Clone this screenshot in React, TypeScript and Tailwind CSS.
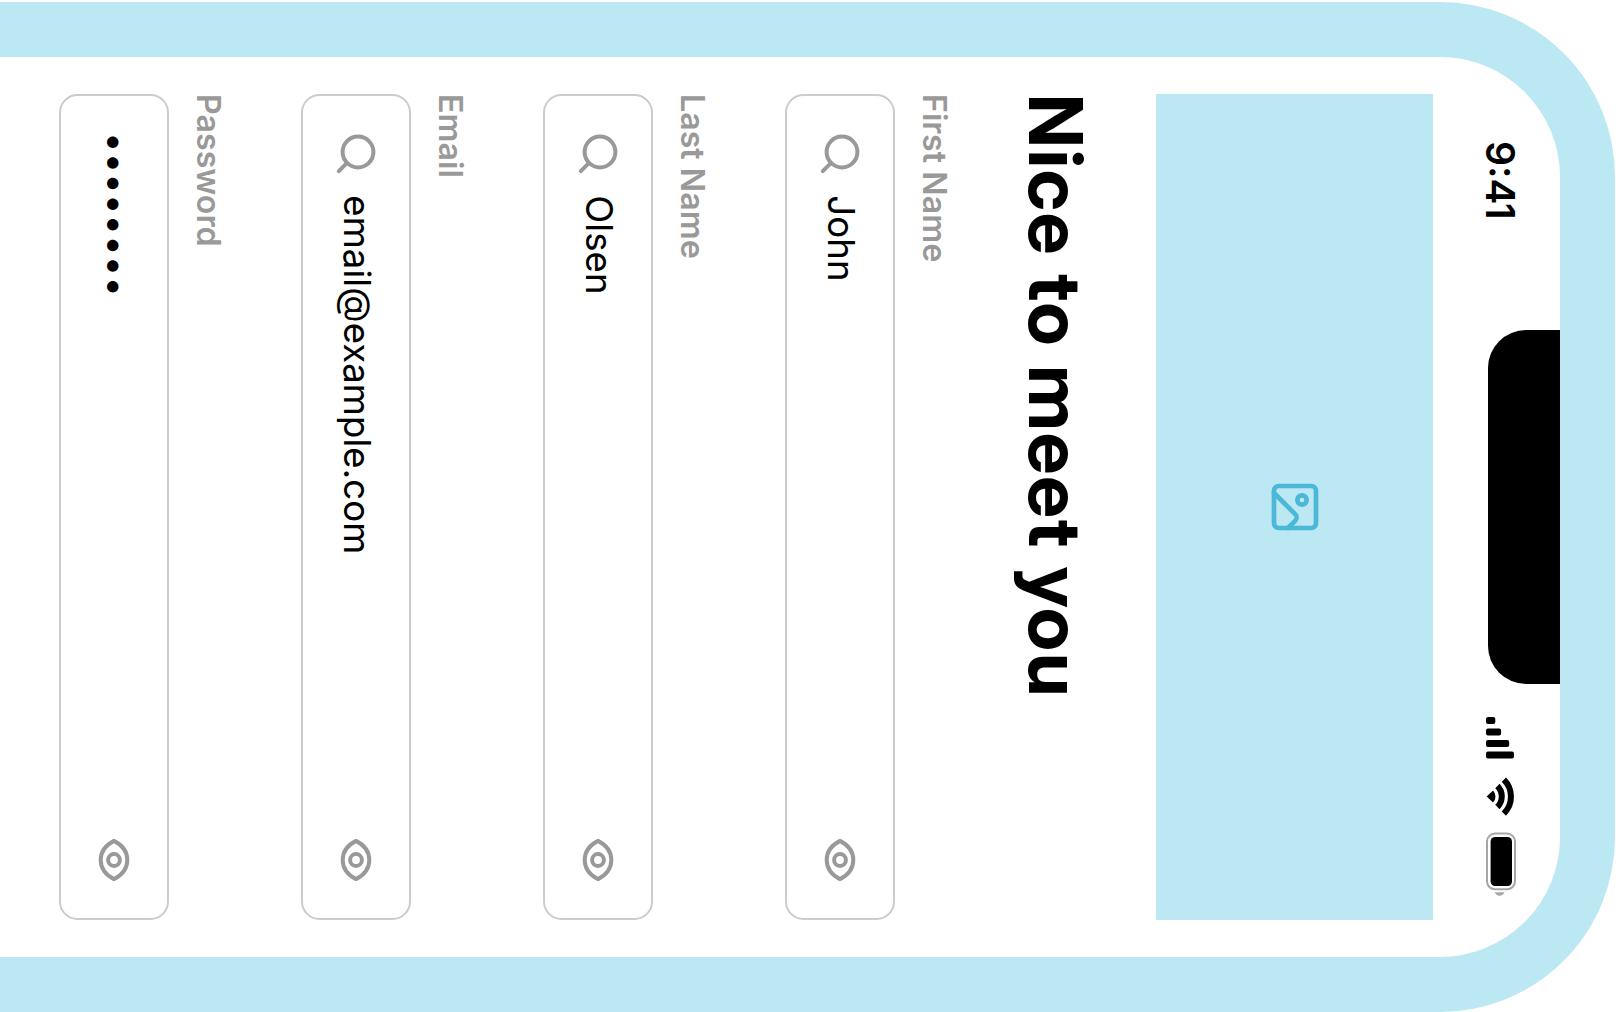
import { Image } from "lucide-react";

function SearchIcon() {
  return (
    <svg className="block shrink-0" width="44" height="44" viewBox="0 0 44 44" fill="none" stroke="#999999" strokeWidth="4" strokeLinecap="round">
      <circle cx="20" cy="20" r="15.4" />
      <path d="M31.2 31.2 L39.2 39.2" />
    </svg>
  );
}

function EyeIcon() {
  return (
    <svg className="block shrink-0" width="44" height="34" viewBox="0 0 44 34" fill="none" stroke="#999999" strokeWidth="4" strokeLinejoin="round">
      <path d="M2.9 17 C6.8 9.3 13.3 3.7 22 3.7 S37.2 9.3 41.1 17 C37.2 24.7 30.7 30.3 22 30.3 S6.8 24.7 2.9 17 Z" />
      <circle cx="22" cy="17" r="5.9" />
    </svg>
  );
}

function StatusIcons() {
  return (
    <svg className="block shrink-0" width="180" height="32" viewBox="0 0 180 32">
      <rect x="1" y="20.7" width="7" height="9.3" rx="2" />
      <rect x="12.4" y="14.9" width="7" height="15.1" rx="2" />
      <rect x="24" y="6.8" width="7" height="23.2" rx="2" />
      <rect x="35.4" y="2" width="7.2" height="28" rx="2" />
      <path d="M80.5 29.3 L74.4 23 A8.7 8.7 0 0 1 86.6 23 Z" />
      <path d="M70 18.6 A14.8 14.8 0 0 1 91 18.6" fill="none" stroke="#000" strokeWidth="6" />
      <path d="M63.5 12.1 A24 24 0 0 1 97.5 12.1" fill="none" stroke="#000" strokeWidth="6" />
      <rect x="117.5" y="1" width="55.8" height="28" rx="8" fill="none" stroke="#a6a6a6" strokeWidth="2" />
      <rect x="121" y="4" width="49" height="21.4" rx="4.5" />
      <path d="M176.3 11.5 V21.3 C178.4 20.4 179.8 18.5 179.8 16.4 S178.4 12.4 176.3 11.5 Z" fill="#a6a6a6" />
    </svg>
  );
}

function Field({ label, value, password = false }: { label: string; value: string; password?: boolean }) {
  return (
    <div className="mb-[72.8px]">
      <div className="h-[40px] text-[32.2px] leading-[40px] font-semibold text-[#999999]">{label}</div>
      <div className="mt-[19px] flex h-[110.3px] items-center rounded-[18.5px] border-2 border-[#cccccc] pr-[36px] pl-[36px]">
        {!password && (
          <div className="mr-[19.3px]">
            <SearchIcon />
          </div>
        )}
        <div className="grow pb-[2px] text-[36.7px] leading-[46px] text-black">{value}</div>
        <EyeIcon />
      </div>
    </div>
  );
}

export default function App() {
  return (
    <div className="flex h-[1012px] w-[1616px] items-center justify-center overflow-hidden bg-white font-['Inter',sans-serif]">
      <div className="h-[1616px] w-[1012px] shrink-0 rotate-90 overflow-hidden pt-[1px] pl-[2px]">
        <div className="h-[1800px] w-[1010px] rounded-[175px] border-[55px] border-[#bce8f4] px-[37px]">
          <div className="flex h-[127px]">
            <div className="mt-[36px] w-[235.5px] pl-[47px] text-[39px] leading-[48px] font-semibold">9:41</div>
            <div className="h-[71.5px] w-[354.4px] shrink-0 rounded-b-[38px] bg-black" />
            <div className="mt-[44px] ml-[32px]">
              <StatusIcons />
            </div>
          </div>
          <div className="flex h-[277px] w-[826px] items-center justify-center bg-[#bce8f4]">
            <Image className="relative -top-px" size={56} strokeWidth={2} color="#4cb8d8" />
          </div>
          <h1 className="mt-[55px] mb-[56.5px] h-[90px] font-['Inter_Display','Inter',sans-serif] text-[74.3px] leading-[90px] font-bold tracking-[0.024em] whitespace-nowrap text-black">
            Nice to meet you
          </h1>
          <Field label="First Name" value="John" />
          <Field label="Last Name" value="Olsen" />
          <Field label="Email" value="email@example.com" />
          <Field label="Password" value="••••••••" password />
        </div>
      </div>
    </div>
  );
}
